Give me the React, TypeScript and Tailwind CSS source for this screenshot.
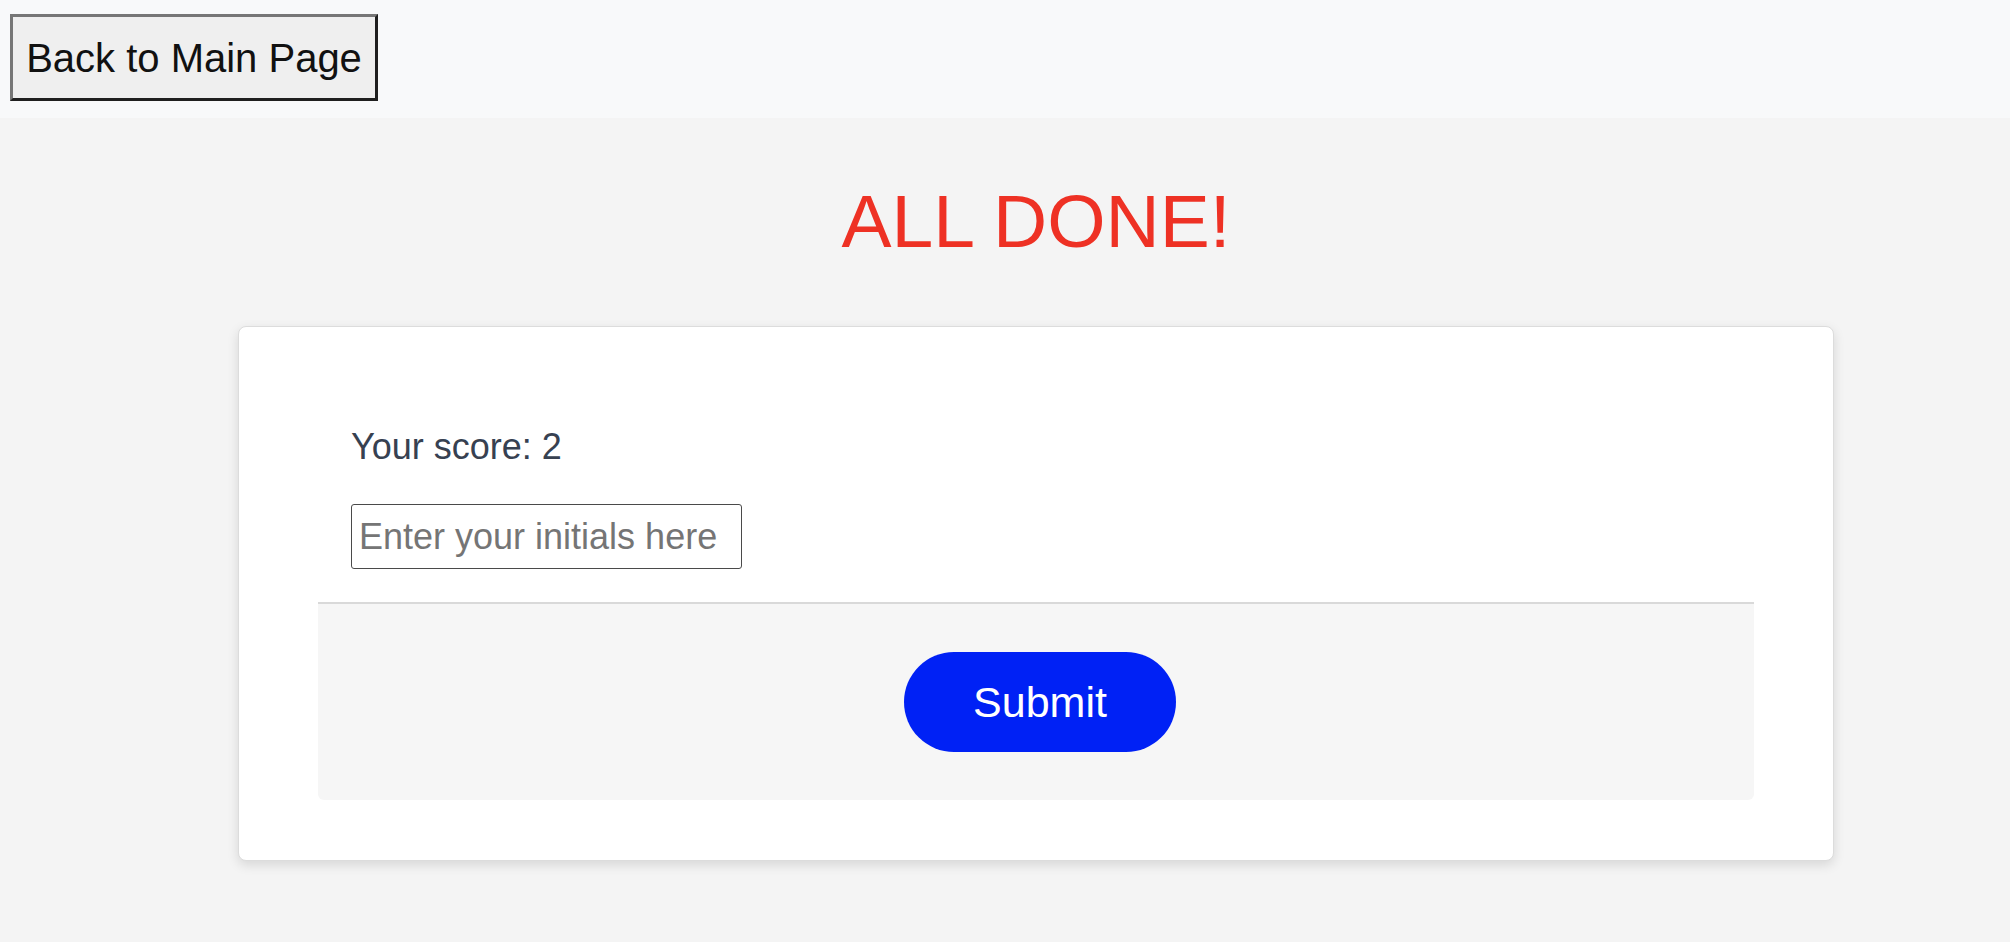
export default function App() {
    return (
        <div className="min-h-screen bg-[#f4f4f4] font-['Liberation_Sans',Arial,sans-serif]">
            <header className="h-[118px] bg-[#f8f9fa] pt-[14px] pl-[10px]">
                <button
                    type="button"
                    className="h-[87px] w-[368px] flex items-center justify-center bg-[#efefef] text-[40px] leading-none text-[#111] border-[3px] border-solid border-t-[#767676] border-l-[#767676] border-b-[#1f1f1f] border-r-[#1f1f1f]"
                >
                    Back to Main Page
                </button>
            </header>

            <main className="pl-[238px] pr-[176px]">
                <h1 className="mt-[66px] text-center text-[75px] leading-none text-[#ee3124]">ALL DONE!</h1>

                <div className="mt-[67px] bg-white border border-[#dcdcdc] rounded-lg shadow-[0_4px_12px_rgba(0,0,0,0.12)] px-[79px] pt-[102px] pb-[60px]">
                    <div className="pl-[33px] pb-[33px]">
                        <p className="text-[36px] leading-none text-[#374151]">Your score: 2</p>
                        <input
                            type="text"
                            placeholder="Enter your initials here"
                            className="mt-[39px] block w-[391px] h-[65px] px-[7px] text-[36px] text-[#222] placeholder:text-[#757575] border border-[#4a4a4a] rounded-[3px] bg-white outline-none"
                        />
                    </div>
                    <div className="bg-[#f6f6f6] border-t-2 border-[#d9d9d9] rounded-b-md pt-[48px] pb-[48px] pl-[8px] flex justify-center">
                        <button
                            type="submit"
                            className="w-[272px] h-[100px] rounded-full bg-[#0021f5] text-white text-[43px] leading-none"
                        >
                            Submit
                        </button>
                    </div>
                </div>
            </main>
        </div>
    );
}
